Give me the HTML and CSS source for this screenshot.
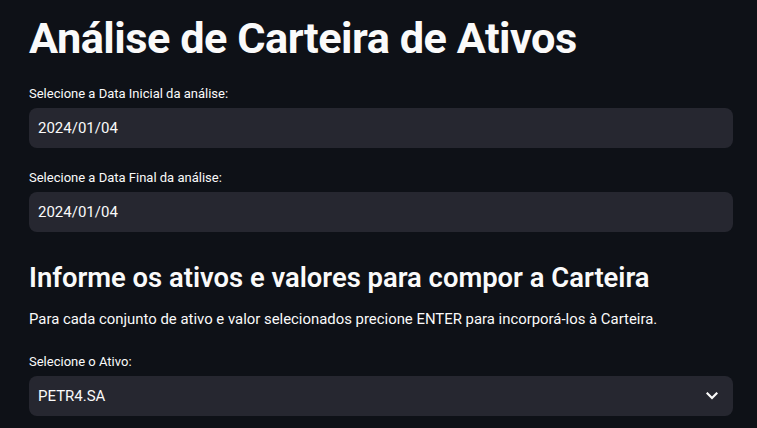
FILE: index.html
```html
<!DOCTYPE html>
<html lang="pt">
<head>
<meta charset="utf-8">
<link rel="stylesheet" href="styles.css">
</head>
<body>
<main class="main">
  <h1 class="title">Análise de Carteira de Ativos</h1>
  <div class="field">
    <label class="label">Selecione a Data Inicial da análise:</label>
    <div class="input">2024/01/04</div>
  </div>
  <div class="field">
    <label class="label">Selecione a Data Final da análise:</label>
    <div class="input">2024/01/04</div>
  </div>
  <h2 class="subtitle">Informe os ativos e valores para compor a Carteira</h2>
  <p class="text">Para cada conjunto de ativo e valor selecionados precione ENTER para incorporá-los à Carteira.</p>
  <div class="field">
    <label class="label">Selecione o Ativo:</label>
    <div class="input select">
      <span>PETR4.SA</span>
      <svg class="chev" width="12" height="8" viewBox="0 0 12 8"><path d="M1.5 1.5 L6 6 L10.5 1.5" fill="none" stroke="#fafafa" stroke-width="2.2" stroke-linecap="square"/></svg>
    </div>
  </div>
</main>
</body>
</html>
```
FILE: styles.css
```css
html, body {
  margin: 0;
  padding: 0;
  background: #0e1117;
  color: #fafafa;
  font-family: Roboto, "Noto Sans", sans-serif;
}
.main {
  width: 704px;
  padding: 0 0 0 29px;
  display: flex;
  flex-direction: column;
}
.title {
  margin: 13px 0 0;
  font-size: 43.3px;
  line-height: 52px;
  font-weight: 700;
  letter-spacing: -0.5px;
}
.field {
  display: flex;
  flex-direction: column;
}
.label {
  font-size: 13px;
  line-height: 20px;
  height: 20px;
  margin-top: 19px;
  margin-bottom: 4px;
}
.field + .field .label { margin-top: 20px; }
.input {
  height: 40px;
  background: #262730;
  border-radius: 8px;
  box-sizing: border-box;
  padding: 0 9px;
  display: flex;
  align-items: center;
  font-size: 15px;
}
.select { justify-content: space-between; padding-right: 15px; }
.subtitle {
  margin: 28px 0 0;
  font-size: 27.4px;
  line-height: 36px;
  font-weight: 600;
}
.text {
  margin: 11px 0 0;
  font-size: 14.9px;
  line-height: 24px;
}
.text + .field .label { margin-top: 21px; }
```
